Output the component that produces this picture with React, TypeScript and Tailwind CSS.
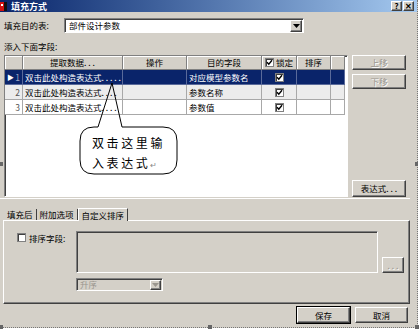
import type { ReactNode } from 'react';

const raised =
  'bg-[#d4d0c8] border border-t-white border-l-white border-r-[#404040] border-b-[#404040] shadow-[inset_-1px_-1px_0_#808080]';
const sunken =
  'border border-t-[#808080] border-l-[#808080] border-r-white border-b-white shadow-[inset_1px_1px_0_#404040]';

function Arrow({ color = '#000' }: { color?: string }) {
  return (
    <svg width="7" height="4" viewBox="0 0 7 4">
      <path d="M0 0h7L3.5 4z" fill={color} />
    </svg>
  );
}

function Check() {
  return (
    <span className="w-[9px] h-[9px] bg-white border border-[#808080] shadow-[inset_1px_1px_0_#404040] flex items-center justify-center">
      <svg width="7" height="7" viewBox="0 0 7 7">
        <path d="M1 3.2l1.8 2L6 1.2" stroke="#000" strokeWidth="1.4" fill="none" />
      </svg>
    </span>
  );
}

function Btn({ children, disabled, def, className = '' }: { children: ReactNode; disabled?: boolean; def?: boolean; className?: string }) {
  return (
    <div
      className={`${raised} flex items-center justify-center ${def ? 'outline outline-1 outline-black' : ''} ${
        disabled ? 'text-[#9a968f] [text-shadow:1px_1px_0_#fff]' : 'text-black'
      } ${className}`}
    >
      {children}
    </div>
  );
}

const rows = [
  { n: 1, expr: '双击此处构造表达式. . . . .', field: '对应模型参数名' },
  { n: 2, expr: '双击此处构造表达式. . . .', field: '参数名称' },
  { n: 3, expr: '双击此处构造表达式. . . .', field: '参数值' },
];

const head = 'h-[14px] bg-[#d4d0c8] border-r border-b border-[#808080] shadow-[inset_1px_1px_0_#fff] flex items-center justify-center';

function Grid() {
  return (
    <div className={`${sunken} w-[344px] h-[142px] bg-white overflow-hidden`}>
      <div className="grid grid-cols-[18px_100px_64px_75px_35px_34px_14px]">
        <div className={head} />
        <div className={head}>提取数据. . .</div>
        <div className={head}>操作</div>
        <div className={head}>目的字段</div>
        <div className={`${head} gap-[2px]`}>
          <Check />
          <span>锁定</span>
        </div>
        <div className={head}>排序</div>
        <div className={head} />
        {rows.map((r) => {
          const sel = r.n === 1;
          const bg = sel ? 'bg-[#0a246a] text-white border-[#5a6a9a]' : r.n === 2 ? 'bg-[#ececec] border-[#a8a8a8]' : 'bg-white border-[#a8a8a8]';
          const cell = `h-[15px] border-r border-b ${bg} flex items-center overflow-hidden whitespace-nowrap`;
          return (
            <div key={r.n} className="contents">
              <div className={`${cell} ${sel ? '' : 'bg-[#e4e2de]'} justify-between pl-[2px] pr-[2px]`}>
                <span className="text-[7px]">{sel ? '▶' : ''}</span>
                <span className={sel ? 'text-[#9aa4c4]' : 'text-[#555]'}>{r.n}</span>
              </div>
              <div className={`${cell} pl-[2px]`}>{r.expr}</div>
              <div className={cell} />
              <div className={`${cell} pl-[2px]`}>{r.field}</div>
              <div className={`${cell} justify-center`}>
                <Check />
              </div>
              <div className={cell} />
              <div className={cell} />
            </div>
          );
        })}
      </div>
    </div>
  );
}

export default function App() {
  return (
    <div className="w-[420px] h-[329px] bg-white relative overflow-hidden font-['Noto_Sans_CJK_SC','Liberation_Sans',sans-serif] text-[8.5px] leading-none text-black">
      <div className="w-[418px] h-[328px] border-r border-b border-dotted border-[#777] bg-[#d4d0c8] flex flex-col">
        {/* title bar */}
        <div className="h-[12px] flex items-center bg-gradient-to-r from-[#0a246a] to-[#a6caf0]">
          <svg width="9" height="11" viewBox="0 0 9 11" className="shrink-0">
            <rect x="0" y="1" width="4" height="9" fill="#d01010" />
            <rect x="4" y="1" width="3" height="9" fill="#111" />
            <rect x="1" y="3" width="2" height="2" fill="#fff" />
          </svg>
          <span className="ml-[2px] text-white font-bold text-[9px]">填充方式</span>
          <div className="ml-auto mr-[3px] flex gap-[1px]">
            <div className={`${raised} w-[11px] h-[10px] flex items-center justify-center font-bold text-[8px]`}>?</div>
            <div className={`${raised} w-[11px] h-[10px] flex items-center justify-center font-bold text-[8px]`}>✕</div>
          </div>
        </div>

        {/* target table */}
        <div className="mt-[6px] h-[15px] flex items-center pl-[4px]">
          <span className="w-[60px]">填充目的表:</span>
          <div className={`${sunken} bg-white w-[240px] h-[15px] flex items-center pl-[4px] pr-[1px]`}>
            <span>部件设计参数</span>
            <div className={`${raised} ml-auto w-[12px] h-[12px] flex items-center justify-center`}>
              <Arrow />
            </div>
          </div>
        </div>

        <div className="mt-[7px] h-[12px] flex items-center pl-[4px]">添入下面字段:</div>

        {/* grid + side buttons */}
        <div className="mt-[3px] flex pl-[4px]">
          <Grid />
          <div className="ml-[4px] w-[54px] flex flex-col">
            <Btn disabled className="h-[15px]">上移</Btn>
            <Btn disabled className="h-[15px] mt-[4px]">下移</Btn>
            <Btn className="h-[17px] mt-auto">表达式. . .</Btn>
          </div>
        </div>

        <div className="mt-[1px] h-[1px] w-[410px] bg-white" />

        {/* tabs */}
        <div className="mt-[8px] h-[13px] flex items-end pl-[4px]">
          <div className="h-[11px] px-[3px] flex items-center border-r border-[#404040]">填充后</div>
          <div className="h-[11px] px-[3px] flex items-center border-r border-[#404040]">附加选项</div>
          <div className="h-[13px] px-[3px] flex items-center bg-[#d4d0c8] border-t border-l border-white border-r border-r-[#404040] relative z-10 -mb-[1px]">
            自定义排序
          </div>
        </div>

        {/* tab panel */}
        <div className="ml-[3px] w-[407px] h-[84px] border border-t-white border-l-white border-r-[#404040] border-b-[#404040] shadow-[inset_-1px_-1px_0_#808080] flex pt-[10px] pl-[13px]">
          <div className="w-[59px] flex items-start gap-[3px] mt-[2px]">
            <span className="w-[9px] h-[9px] bg-white border border-[#808080] shadow-[inset_1px_1px_0_#404040]" />
            <span className="mt-[1px]">排序字段:</span>
          </div>
          <div className="flex flex-col">
            <div className="flex items-end">
              <div className={`${sunken} w-[302px] h-[42px] bg-[#d4d0c8]`} />
              <Btn disabled className="ml-[4px] w-[22px] h-[16px]">. . .</Btn>
            </div>
            <div className={`${sunken} mt-[5px] w-[87px] h-[13px] bg-[#d4d0c8] flex items-center pl-[3px] pr-[1px] text-[#9a968f]`}>
              <span>升序</span>
              <div className={`${raised} ml-auto w-[11px] h-[10px] flex items-center justify-center`}>
                <Arrow color="#9a968f" />
              </div>
            </div>
          </div>
        </div>

        {/* bottom buttons */}
        <div className="mt-[3px] flex justify-end gap-[5px] pr-[9px]">
          <Btn def className="w-[53px] h-[16px]">保存</Btn>
          <Btn className="w-[53px] h-[16px]">取消</Btn>
        </div>
      </div>

      {/* callout balloon */}
      <svg className="absolute left-0 top-0 pointer-events-none" width="420" height="329">
        <path d="M94 127 H163 Q177 127 177 141 V160 Q177 174 163 174 H94 Q80 174 80 160 V141 Q80 127 94 127 Z" fill="#fff" />
        <path
          d="M98 127 L112 83 L122 127 H163 Q177 127 177 141 V160 Q177 174 163 174 H94 Q80 174 80 160 V141 Q80 127 94 127 Z"
          fill="none"
          stroke="#000"
          strokeWidth="1"
        />
      </svg>
      <div className="absolute left-[92px] top-[133px] text-[12px] leading-[20px] tracking-[2.6px]">
        <div>双击这里输</div>
        <div>
          入表达式<span className="text-[8px] text-[#888] tracking-normal">↵</span>
        </div>
      </div>

      {/* selection handles */}
      <div className="absolute left-0 top-[162px] w-[3px] h-[4px] bg-[#666]" />
      <div className="absolute left-[415px] top-[162px] w-[3px] h-[4px] bg-[#666]" />
      <div className="absolute left-0 top-[325px] w-[3px] h-[4px] bg-[#666]" />
      <div className="absolute left-[208px] top-[325px] w-[4px] h-[4px] bg-[#666]" />
      <div className="absolute left-[415px] top-[325px] w-[4px] h-[4px] bg-[#666]" />
    </div>
  );
}
